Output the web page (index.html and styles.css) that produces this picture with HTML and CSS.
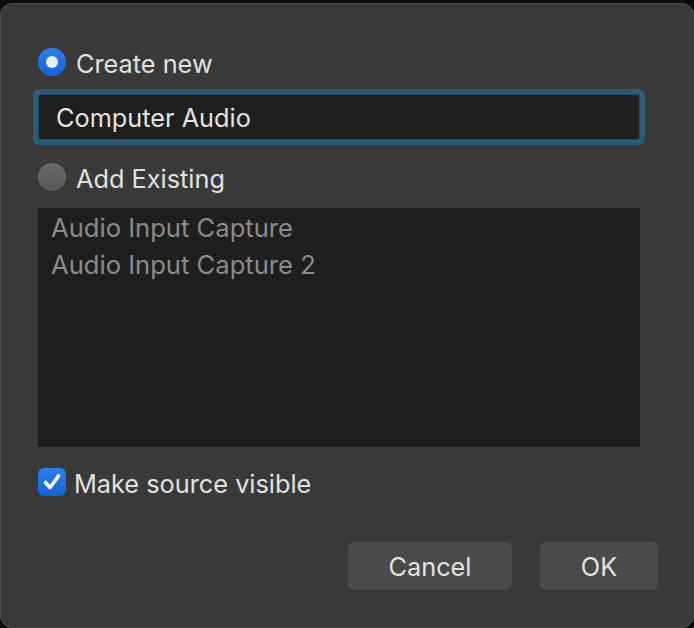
FILE: index.html
```html
<!DOCTYPE html>
<html>
<head>
<meta charset="utf-8">
<link rel="stylesheet" href="styles.css">
</head>
<body>
<div class="window">
  <label class="option">
    <span class="radio radio-on"><span class="dot"></span></span>
    <span class="label">Create new</span>
  </label>
  <div class="field">Computer Audio</div>
  <label class="option option-second">
    <span class="radio radio-off"></span>
    <span class="label">Add Existing</span>
  </label>
  <div class="list">
    <div class="item">Audio Input Capture</div>
    <div class="item">Audio Input Capture 2</div>
  </div>
  <label class="option option-check">
    <span class="check">
      <svg width="28" height="28" viewBox="0 0 28 28"><path d="M7.5 14.5 L12 19.5 L20.5 8" fill="none" stroke="#ffffff" stroke-width="3.6" stroke-linecap="round" stroke-linejoin="round"/></svg>
    </span>
    <span class="label">Make source visible</span>
  </label>
  <div class="buttons">
    <div class="btn btn-cancel">Cancel</div>
    <div class="btn btn-ok">OK</div>
  </div>
</div>
</body>
</html>
```
FILE: styles.css
```css
html, body {
  margin: 0;
  padding: 0;
  background: #0c0c0c;
  height: 628px;
  overflow: hidden;
}
body {
  font-family: "Inter", "Liberation Sans", sans-serif;
  color: #e1e1e1;
}
.window {
  margin-top: 3px;
  height: 625px;
  box-sizing: border-box;
  background: #393939;
  border-radius: 13px;
  box-shadow: inset 0 0 0 1px #4a4a4a;
  padding: 45px 36px 0 38px;
  display: flex;
  flex-direction: column;
}
.option {
  display: flex;
  align-items: center;
  height: 28px;
  gap: 10px;
  font-size: 25.3px;
}
.label {
  position: relative;
  top: 1px;
}
.radio {
  width: 28px;
  height: 28px;
  border-radius: 50%;
  box-sizing: border-box;
  display: flex;
  align-items: center;
  justify-content: center;
  flex: none;
}
.radio-on {
  background: linear-gradient(#2b80ec, #1463d2);
}
.dot {
  width: 12px;
  height: 12px;
  border-radius: 50%;
  background: #e4eefc;
}
.radio-off {
  background: linear-gradient(#6a6a6a, #585858);
}
.field {
  margin-top: 19px;
  margin-left: 1px;
  width: 600px;
  height: 44px;
  box-sizing: border-box;
  background: #1e1e1e;
  border-radius: 2px;
  box-shadow: 0 0 0 1px #274a63, 0 0 0 6px #2e5a79;
  padding-left: 17px;
  display: flex;
  align-items: center;
  font-size: 25.3px;
  color: #e3e3e3;
}
.option-second {
  margin-top: 24px;
}
.list {
  margin-top: 17px;
  width: 602px;
  height: 239px;
  background: #1e1e1e;
  padding: 1px 13px 0;
  box-sizing: border-box;
}
.item {
  height: 37px;
  line-height: 37px;
  font-size: 25.6px;
  color: #8b8b8b;
}
.option-check {
  margin-top: 21px;
  gap: 8px;
}
.check {
  width: 28px;
  height: 28px;
  border-radius: 6px;
  background: linear-gradient(#2b80ec, #1463d2);
  flex: none;
  display: block;
}
.check svg {
  display: block;
}
.buttons {
  margin-top: 46px;
  display: flex;
  justify-content: flex-end;
  gap: 28px;
}
.btn {
  height: 48px;
  border-radius: 6px;
  background: #4a4a4a;
  display: flex;
  align-items: center;
  justify-content: center;
  font-size: 25.3px;
  color: #e2e2e2;
}
.btn-cancel {
  width: 164px;
}
.btn-ok {
  width: 118px;
}
```
